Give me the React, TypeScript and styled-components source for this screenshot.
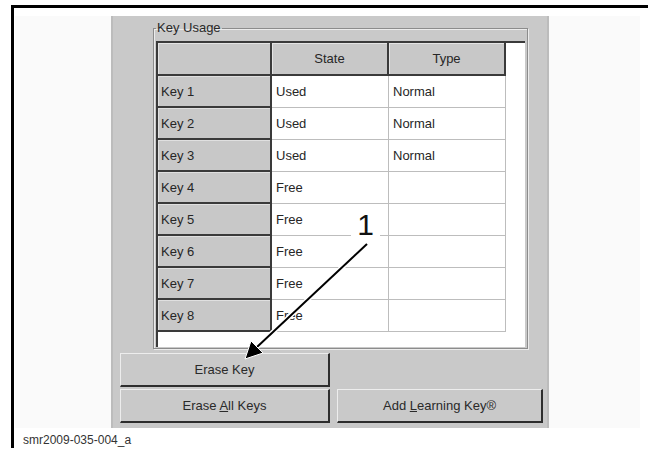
import { Fragment } from "react"
import styled, { createGlobalStyle } from "styled-components"

const GlobalStyle = createGlobalStyle`
    html, body {
        margin: 0;
        padding: 0;
        background: #fff;
    }
    body {
        font-family: "Liberation Sans", Arial, sans-serif;
    }
`

const Page = styled.div`
    position: relative;
    width: 648px;
    height: 450px;
    overflow: hidden;
    box-sizing: border-box;
    padding: 5px 0 0 11px;
    background: #fff;
`

const Frame = styled.div`
    height: 443px;
    box-sizing: border-box;
    border-top: 3px solid #000;
    border-left: 3px solid #000;
    padding: 8px 0 0 1px;
    display: flex;
    flex-direction: column;
`

const Sheet = styled.div`
    width: 625px;
    height: 412px;
    padding-left: 96px;
    box-sizing: border-box;
    background: #fafafa;
`

const Panel = styled.div`
    width: 438px;
    height: 412px;
    box-sizing: border-box;
    padding-top: 5px;
    background: #c9c9c9;
    border-left: 2px solid #bcbcbc;
    border-right: 2px solid #bcbcbc;
    display: flex;
    flex-direction: column;
`

const GroupBox = styled.fieldset`
    margin: 0 0 0 40px;
    width: 375px;
    box-sizing: border-box;
    padding: 6px 2px 1px 2px;
    border: 1px solid #8c8c8c;
    box-shadow: inset 1px 1px 0 #ececec, 1px 1px 0 #ececec;
`

const Legend = styled.legend`
    margin-left: 0;
    padding: 0 1px;
    font-size: 13px;
    line-height: 14px;
    color: #2a2a2a;
`

const ListBox = styled.div`
    height: 306px;
    box-sizing: border-box;
    background: #fff;
    border-top: 2px solid #3a3a3a;
    border-left: 2px solid #3a3a3a;
    display: grid;
    grid-template-columns: 114px 117px 117px 1fr;
    grid-template-rows: 33px repeat(8, 32px);
    align-content: start;
`

const Cell = styled.div`
    box-sizing: border-box;
    display: flex;
    align-items: center;
    font-size: 13px;
    color: #262626;
    white-space: nowrap;
`

const HeaderCell = styled(Cell)`
    justify-content: center;
    background: #c8c8c8;
    border-right: 2px solid #3a3a3a;
    border-bottom: 2px solid #3a3a3a;
    box-shadow: inset 1px 1px 0 #e4e4e4;
`

const KeyCell = styled(Cell)`
    padding-left: 3px;
    background: #c8c8c8;
    border-right: 2px solid #3a3a3a;
    border-bottom: 2px solid #3a3a3a;
    box-shadow: inset 1px 1px 0 #e0e0e0;
`

const DataCell = styled(Cell)`
    padding-left: 4px;
    background: #fff;
    border-right: 1px solid #bdbdbd;
    border-bottom: 1px solid #bdbdbd;
`

const Filler = styled.div`
    background: #fff;
`

const ButtonGrid = styled.div`
    margin: 4px 0 0 7px;
    display: grid;
    grid-template-columns: 210px 206px;
    grid-template-rows: 34px 34px;
    column-gap: 7px;
    row-gap: 2px;
`

const GapSlot = styled.div``

const WinButton = styled.button`
    margin: 0;
    padding: 0;
    box-sizing: border-box;
    background: #c9c9c9;
    border: 1px solid #ededed;
    border-right: 2px solid #2e2e2e;
    border-bottom: 2px solid #2e2e2e;
    font-family: "Liberation Sans", Arial, sans-serif;
    font-size: 13px;
    color: #2a2a2a;
`

const Caption = styled.div`
    margin: 5px 0 0 8px;
    font-size: 12px;
    line-height: 14px;
    color: #333;
`

const Callout = styled.div`
    position: absolute;
    left: 351px;
    top: 207px;
    width: 29px;
    height: 31px;
    background: #fff;
    text-align: center;
    font-size: 30px;
    line-height: 35px;
    color: #111;
`

const Arrow = styled.svg`
    position: absolute;
    left: 0;
    top: 0;
    pointer-events: none;
`

const keys = [
    { name: "Key 1", state: "Used", type: "Normal" },
    { name: "Key 2", state: "Used", type: "Normal" },
    { name: "Key 3", state: "Used", type: "Normal" },
    { name: "Key 4", state: "Free", type: "" },
    { name: "Key 5", state: "Free", type: "" },
    { name: "Key 6", state: "Free", type: "" },
    { name: "Key 7", state: "Free", type: "" },
    { name: "Key 8", state: "Free", type: "" },
]

const App = () => {
    return (
        <>
            <GlobalStyle />
            <Page>
                <Frame>
                    <Sheet>
                        <Panel>
                            <GroupBox>
                                <Legend>Key Usage</Legend>
                                <ListBox>
                                    <HeaderCell />
                                    <HeaderCell>State</HeaderCell>
                                    <HeaderCell>Type</HeaderCell>
                                    <Filler />
                                    {keys.map((k) => (
                                        <Fragment key={k.name}>
                                            <KeyCell>{k.name}</KeyCell>
                                            <DataCell>{k.state}</DataCell>
                                            <DataCell>{k.type}</DataCell>
                                            <Filler />
                                        </Fragment>
                                    ))}
                                </ListBox>
                            </GroupBox>
                            <ButtonGrid>
                                <WinButton>Erase Key</WinButton>
                                <GapSlot />
                                <WinButton>
                                    Erase <u>A</u>ll Keys
                                </WinButton>
                                <WinButton>
                                    Add <u>L</u>earning Key®
                                </WinButton>
                            </ButtonGrid>
                        </Panel>
                    </Sheet>
                    <Caption>smr2009-035-004_a</Caption>
                </Frame>
                <Callout>1</Callout>
                <Arrow width="648" height="450" viewBox="0 0 648 450">
                    <line x1="367" y1="244" x2="257" y2="347" stroke="#fff" strokeWidth="5" />
                    <line x1="367" y1="244" x2="257" y2="347" stroke="#000" strokeWidth="2" />
                    <polygon points="245,359 251,341 263,353" fill="#000" stroke="#fff" strokeWidth="1" />
                </Arrow>
            </Page>
        </>
    )
}

export default App
